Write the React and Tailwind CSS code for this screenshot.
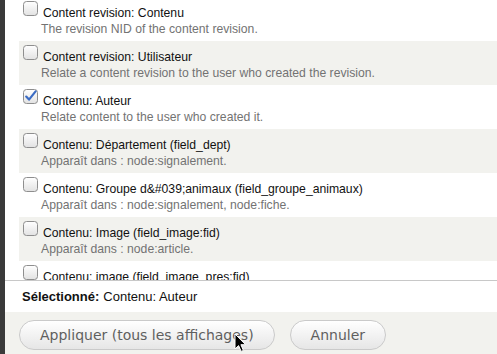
import React from 'react'

const rows = [
  { label: 'Content revision: Contenu', desc: 'The revision NID of the content revision.' },
  { label: 'Content revision: Utilisateur', desc: 'Relate a content revision to the user who created the revision.' },
  { label: 'Contenu: Auteur', desc: 'Relate content to the user who created it.', checked: true },
  { label: 'Contenu: Département (field_dept)', desc: 'Apparaît dans : node:signalement.' },
  { label: 'Contenu: Groupe d&#039;animaux (field_groupe_animaux)', desc: 'Apparaît dans : node:signalement, node:fiche.' },
  { label: 'Contenu: Image (field_image:fid)', desc: 'Apparaît dans : node:article.' },
  { label: 'Contenu: image (field_image_pres:fid)', desc: 'Apparaît dans : node:page.' },
]

function Checkbox({ checked }) {
  return (
    <svg width="15" height="15" viewBox="0 0 15 15" className="shrink-0">
      <defs>
        <linearGradient id="cbfill" x1="0" y1="0" x2="0" y2="1">
          <stop offset="0" stopColor="#ffffff" />
          <stop offset="1" stopColor="#e2e2e2" />
        </linearGradient>
      </defs>
      <rect x="0.5" y="0.5" width="14" height="14" rx="3" fill="url(#cbfill)" stroke="#8e8e8e" />
      {checked && (
        <path
          d="M3.2 7.6 L6 10.6 L12.6 2.4"
          fill="none"
          stroke="#3b6cc4"
          strokeWidth="2.2"
          strokeLinecap="round"
          strokeLinejoin="round"
        />
      )}
    </svg>
  )
}

function Row({ label, desc, checked, striped }) {
  return (
    <div className={`h-[44px] ${striped ? 'bg-[#f2f2ee]' : 'bg-white'}`}>
      <div className="flex items-start pl-[4px] pt-[4px]">
        <Checkbox checked={checked} />
        <span className="ml-[5px] mt-[4px] whitespace-nowrap leading-[16px] text-[#111]">{label}</span>
      </div>
      <div className="whitespace-nowrap pl-[22px] leading-[16px] text-[#737373]">{desc}</div>
    </div>
  )
}

function Cursor() {
  return (
    <svg width="13" height="20" viewBox="0 0 13 20" className="absolute left-[234px] top-[333px]">
      <path
        d="M1 1 L1 16 L4.6 12.6 L7.2 18.4 L9.4 17.4 L6.9 11.7 L11.6 11.7 Z"
        fill="#000"
        stroke="#fff"
        strokeWidth="1"
        strokeLinejoin="round"
      />
    </svg>
  )
}

export default function App() {
  return (
    <div className="relative flex h-[354px] w-[497px] overflow-hidden bg-white font-['Liberation_Sans',Arial,sans-serif] text-[12.2px]">
      <div className="w-[5px] shrink-0 bg-[#3a3a3a]" />
      <div className="flex min-w-0 flex-1 flex-col">
        {/* scrolling list of relationships */}
        <div className="h-[280px] shrink-0 overflow-hidden pl-[14px]">
          <div className="-mt-[3px]">
            {rows.map((r, i) => (
              <Row key={i} {...r} striped={i % 2 === 1} />
            ))}
          </div>
        </div>
        <div className="flex h-[32px] shrink-0 items-center border-t border-[#c8c8c8] pl-[17px] text-[13px] leading-[16px] text-[#111]">
          <span className="font-bold">Sélectionné:</span>
          <span className="ml-[4px]">Contenu: Auteur</span>
        </div>
        <div className="flex flex-1 items-start gap-[15px] bg-[#f2f2ee] pl-[14px] pt-[8px] font-['DejaVu_Sans',Verdana,sans-serif] text-[14px] text-[#5f5f5f]">
          <button className="h-[30px] rounded-full border border-[#cacaca] bg-linear-to-b from-white to-[#e6e6e6] px-[20px]">
            Appliquer (tous les affichages)
          </button>
          <button className="h-[30px] rounded-full border border-[#cacaca] bg-linear-to-b from-white to-[#e6e6e6] px-[20px]">
            Annuler
          </button>
        </div>
      </div>
      <Cursor />
    </div>
  )
}
